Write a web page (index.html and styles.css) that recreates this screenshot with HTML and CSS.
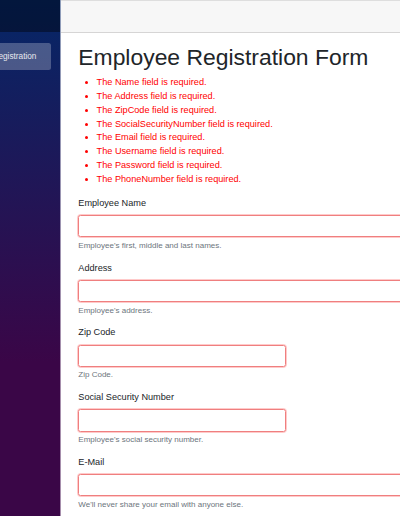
FILE: index.html
```html
<!DOCTYPE html>
<html lang="en">
<head>
<meta charset="utf-8">
<title>Employee Registration Form</title>
<link rel="stylesheet" href="styles.css">
</head>
<body>
<div class="page">
  <div class="sidebar">
    <div class="sidebar-inner">
      <div class="brand-row"></div>
      <nav class="nav">
        <a class="nav-link active" href="#">Employee Registration</a>
      </nav>
    </div>
  </div>
  <main class="main">
    <div class="top-row"></div>
    <article class="content">
      <h1 class="title">Employee Registration Form</h1>
      <ul class="validation-errors">
        <li>The Name field is required.</li>
        <li>The Address field is required.</li>
        <li>The ZipCode field is required.</li>
        <li>The SocialSecurityNumber field is required.</li>
        <li>The Email field is required.</li>
        <li>The Username field is required.</li>
        <li>The Password field is required.</li>
        <li>The PhoneNumber field is required.</li>
      </ul>
      <form class="form">
        <div class="group">
          <label class="label">Employee Name</label>
          <input class="input invalid" type="text">
          <div class="help">Employee's first, middle and last names.</div>
        </div>
        <div class="group">
          <label class="label">Address</label>
          <input class="input invalid" type="text">
          <div class="help">Employee's address.</div>
        </div>
        <div class="group">
          <label class="label">Zip Code</label>
          <input class="input invalid input-short" type="text">
          <div class="help">Zip Code.</div>
        </div>
        <div class="group">
          <label class="label">Social Security Number</label>
          <input class="input invalid input-short" type="text">
          <div class="help">Employee's social security number.</div>
        </div>
        <div class="group">
          <label class="label">E-Mail</label>
          <input class="input invalid" type="email">
          <div class="help">We'll never share your email with anyone else.</div>
        </div>
      </form>
    </article>
  </main>
</div>
</body>
</html>
```
FILE: styles.css
```css
* { box-sizing: border-box; }

html, body {
  margin: 0;
  padding: 0;
  height: 100%;
  overflow: hidden;
  background: #fff;
}

body {
  font-family: "Liberation Sans", Arial, sans-serif;
  color: #212529;
}

.page {
  display: flex;
  width: 400px;
  height: 516px;
  overflow: hidden;
}

.sidebar {
  flex: none;
  width: 61px;
  height: 516px;
  overflow: hidden;
  background: linear-gradient(180deg, rgb(5, 39, 103) 0%, #3a0647 70%);
  border-right: 1px solid rgba(255, 255, 255, 0.55);
}

.sidebar-inner {
  width: 143px;
  margin-left: -83px;
}

.brand-row {
  height: 32px;
  background: rgba(0, 0, 0, 0.4);
}

.nav {
  display: flex;
  flex-direction: column;
  padding: 10.5px 9.2px 0;
}

.nav-link {
  display: flex;
  align-items: center;
  height: 27.5px;
  padding-left: 27.4px;
  border-radius: 2.5px;
  background: rgba(255, 255, 255, 0.25);
  color: #e8e8ee;
  font-size: 8.24px;
  text-decoration: none;
  white-space: nowrap;
}

.main {
  flex: none;
  width: 420px;
  height: 516px;
  display: flex;
  flex-direction: column;
  overflow: hidden;
}

.top-row {
  flex: none;
  height: 33px;
  background: #f7f7f7;
  border-top: 1px solid #dedede;
  border-bottom: 1px solid #d6d5d5;
}

.content {
  flex: none;
  padding: 10.5px 0 0 17.3px;
}

.title {
  margin: 0 0 4.8px;
  font-size: 22.9px;
  font-weight: 400;
  line-height: 1.2;
  color: #212529;
}

.validation-errors {
  margin: 0 0 9.8px;
  padding-left: 18.3px;
  font-size: 9.16px;
  line-height: 13.9px;
  color: red;
}

.group {
  margin-bottom: 9.7px;
}

.label {
  display: block;
  margin-bottom: 4.58px;
  font-size: 9.16px;
  line-height: 13.74px;
  color: #212529;
}

.input {
  display: block;
  width: 340px;
  height: 22.3px;
  margin: 0;
  padding: 0 7px;
  background: #fff;
  border: 1px solid #ef7f7f;
  border-radius: 2.4px;
  font: inherit;
  font-size: 9.16px;
}

.invalid {
  outline: 1px solid rgba(255, 80, 80, 0.3);
}

.input-short {
  width: 207.4px;
}

.help {
  margin-top: 2.4px;
  font-size: 8.02px;
  line-height: 12.03px;
  color: #6c757d;
}
```
